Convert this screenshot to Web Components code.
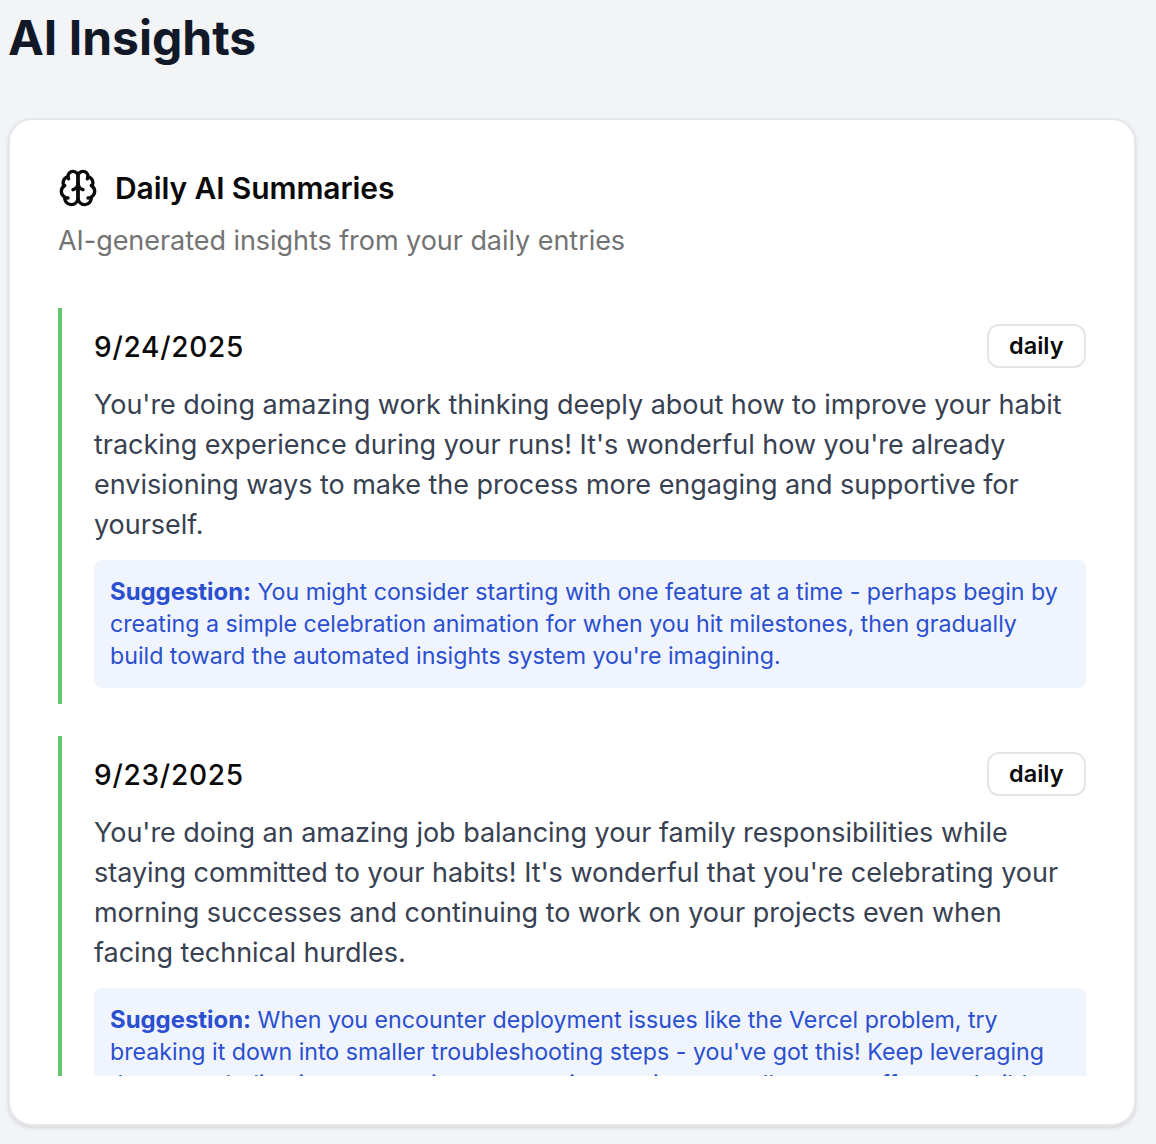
<!DOCTYPE html>
<html><head><meta charset="utf-8">
<style>
html,body{margin:0;padding:0;background:#f3f4f6;}
body{font-family:Inter,"Liberation Sans",sans-serif;}
</style></head>
<body>
<insights-page>
  <span slot="title">AI Insights</span>
  <summary-card heading="Daily AI Summaries" sub="AI-generated insights from your daily entries">
    <summary-entry date="9/24/2025" kind="daily" suggestion="You might consider starting with one feature at a time - perhaps begin by creating a simple celebration animation for when you hit milestones, then gradually build toward the automated insights system you're imagining.">You're doing amazing work thinking deeply about how to improve your habit tracking experience during your runs! It's wonderful how you're already envisioning ways to make the process more engaging and supportive for yourself.</summary-entry>
    <summary-entry date="9/23/2025" kind="daily" suggestion="When you encounter deployment issues like the Vercel problem, try breaking it down into smaller troubleshooting steps - you've got this! Keep leveraging the same dedication you use in your morning routine, as well as your efforts to build habits and effort.">You're doing an amazing job balancing your family responsibilities while staying committed to your habits! It's wonderful that you're celebrating your morning successes and continuing to work on your projects even when facing technical hurdles.</summary-entry>
  </summary-card>
</insights-page>
<script>
function el(name, css, html){
  customElements.define(name, class extends HTMLElement{
    connectedCallback(){
      if(this.shadowRoot) return;
      const r=this.attachShadow({mode:'open'});
      const a=n=>this.getAttribute(n)||'';
      r.innerHTML='<style>'+css+'</style>'+html(a);
    }
  });
}
el('insights-page',
 `:host{display:block;width:1156px;height:1144px;box-sizing:border-box;overflow:hidden;background:#f3f4f6;padding:8px 20px 0 8px}
  h1{margin:0 0 50px;font:700 48px/60px Inter,sans-serif;color:#111827}`,
 ()=>`<h1><slot name="title"></slot></h1><slot></slot>`);
el('summary-card',
 `:host{display:block;box-sizing:border-box;height:1008px;background:#fff;border:2px solid #e5e7eb;border-radius:24px;box-shadow:0 2px 4px rgba(0,0,0,.12);padding:48px 48px 0 48px}
  header{display:flex;align-items:center;gap:17px;height:40px}
  svg{width:40px;height:40px;flex:none;stroke:#0a0a0a;fill:none;stroke-width:2;stroke-linecap:round;stroke-linejoin:round}
  h2{margin:0;font:600 30px/40px Inter,sans-serif;color:#0a0a0a;letter-spacing:-.1px}
  p{margin:13px 0 -1px;font:400 27px/40px Inter,sans-serif;color:#737373;letter-spacing:-.05px}
  .list{margin-top:48px;height:768px;overflow:hidden;display:flex;flex-direction:column;gap:32px}`,
 a=>`<header><svg viewBox="0 0 24 24"><path d="M12 5a3 3 0 1 0-5.997.125 4 4 0 0 0-2.526 5.77 4 4 0 0 0 .556 6.588A4 4 0 1 0 12 18Z"/><path d="M12 5a3 3 0 1 1 5.997.125 4 4 0 0 1 2.526 5.77 4 4 0 0 1-.556 6.588A4 4 0 1 1 12 18Z"/><path d="M15 13a4.5 4.5 0 0 1-3-4 4.5 4.5 0 0 1-3 4"/><path d="M17.599 6.5a3 3 0 0 0 .399-1.375"/><path d="M6.003 5.125A3 3 0 0 0 6.401 6.5"/><path d="M3.477 10.896a4 4 0 0 1 .585-.396"/><path d="M19.938 10.5a4 4 0 0 1 .585.396"/><path d="M6 18a4 4 0 0 1-1.967-.516"/><path d="M19.967 17.484A4 4 0 0 1 18 18"/></svg><h2>${a('heading')}</h2></header><p>${a('sub')}</p><div class="list"><slot></slot></div>`);
el('kind-badge',
 `:host{display:inline-flex;align-items:center;justify-content:center;box-sizing:border-box;height:44px;padding:0 20.5px;border:2px solid #e5e5e5;border-radius:12px;font:600 23.5px/32px Inter,sans-serif;color:#0a0a0a;background:#fff}`,
 ()=>`<slot></slot>`);
el('summary-entry',
 `:host{display:block;flex:none;border-left:4px solid #68c670;padding:16px 0 16px 32px}
  .head{display:flex;justify-content:space-between;align-items:center;height:44px;margin-bottom:16px}
  .date{font:500 28px/40px Inter,sans-serif;color:#0a0a0a;letter-spacing:.75px;padding-top:1px}
  .body{margin:0 0 15px;padding-top:1px;font:400 27px/40px Inter,sans-serif;color:#374151;letter-spacing:-.03px}
  .tip{background:#f0f4fd;border-radius:8px;padding:16px;font:400 23.2px/32px Inter,sans-serif;color:#2a4fd0}
  b{font-weight:700;font-size:23.9px;color:#2a4fd0}`,
 a=>`<div class="head"><span class="date">${a('date')}</span><kind-badge>${a('kind')}</kind-badge></div><p class="body"><slot></slot></p><div class="tip"><b>Suggestion:</b> <span>${a('suggestion')}</span></div>`);
</script>
</body></html>
